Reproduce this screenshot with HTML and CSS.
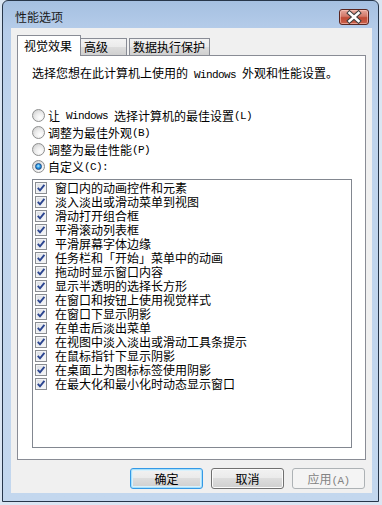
FILE: index.html
```html
<!DOCTYPE html>
<html lang="zh-CN">
<head>
<meta charset="utf-8">
<title>性能选项</title>
<link rel="stylesheet" href="styles.css">
</head>
<body>
<div class="window">
  <div class="titlebar">
    <span class="title">性能选项</span>
    <button class="close" aria-label="关闭">
      <svg width="28" height="14" viewBox="0 0 28 14">
        <path d="M9.5 3 L18.5 11 M18.5 3 L9.5 11" stroke="#3d3d3d" stroke-width="4.6" stroke-linecap="square" fill="none"/>
        <path d="M9.5 3 L18.5 11 M18.5 3 L9.5 11" stroke="#ffffff" stroke-width="2.6" stroke-linecap="square" fill="none"/>
      </svg>
    </button>
  </div>
  <div class="client">
    <div class="tabs">
      <div class="tab active">视觉效果</div>
      <div class="tab t2">高级</div>
      <div class="tab t3">数据执行保护</div>
    </div>
    <div class="panel">
      <p class="intro">选择您想在此计算机上使用的<span class="en"> Windows </span>外观和性能设置。</p>
      <div class="radios">
        <div class="radio"><span class="rb"></span>让<span class="en"> Windows </span>选择计算机的最佳设置<span class="en">(L)</span></div>
        <div class="radio"><span class="rb"></span>调整为最佳外观<span class="en">(B)</span></div>
        <div class="radio"><span class="rb"></span>调整为最佳性能<span class="en">(P)</span></div>
        <div class="radio"><span class="rb on"></span>自定义<span class="en">(C):</span></div>
      </div>
      <div class="listbox">
        <div class="item"><span class="cb"><svg width="10" height="10" viewBox="0 0 10 10"><path d="M1.8 4.8 L4 7.3 L8.4 1.8" stroke="#2b4590" stroke-width="1.9" fill="none"/></svg></span>窗口内的动画控件和元素</div>
        <div class="item"><span class="cb"><svg width="10" height="10" viewBox="0 0 10 10"><path d="M1.8 4.8 L4 7.3 L8.4 1.8" stroke="#2b4590" stroke-width="1.9" fill="none"/></svg></span>淡入淡出或滑动菜单到视图</div>
        <div class="item"><span class="cb"><svg width="10" height="10" viewBox="0 0 10 10"><path d="M1.8 4.8 L4 7.3 L8.4 1.8" stroke="#2b4590" stroke-width="1.9" fill="none"/></svg></span>滑动打开组合框</div>
        <div class="item"><span class="cb"><svg width="10" height="10" viewBox="0 0 10 10"><path d="M1.8 4.8 L4 7.3 L8.4 1.8" stroke="#2b4590" stroke-width="1.9" fill="none"/></svg></span>平滑滚动列表框</div>
        <div class="item"><span class="cb"><svg width="10" height="10" viewBox="0 0 10 10"><path d="M1.8 4.8 L4 7.3 L8.4 1.8" stroke="#2b4590" stroke-width="1.9" fill="none"/></svg></span>平滑屏幕字体边缘</div>
        <div class="item"><span class="cb"><svg width="10" height="10" viewBox="0 0 10 10"><path d="M1.8 4.8 L4 7.3 L8.4 1.8" stroke="#2b4590" stroke-width="1.9" fill="none"/></svg></span>任务栏和「开始」菜单中的动画</div>
        <div class="item"><span class="cb"><svg width="10" height="10" viewBox="0 0 10 10"><path d="M1.8 4.8 L4 7.3 L8.4 1.8" stroke="#2b4590" stroke-width="1.9" fill="none"/></svg></span>拖动时显示窗口内容</div>
        <div class="item"><span class="cb"><svg width="10" height="10" viewBox="0 0 10 10"><path d="M1.8 4.8 L4 7.3 L8.4 1.8" stroke="#2b4590" stroke-width="1.9" fill="none"/></svg></span>显示半透明的选择长方形</div>
        <div class="item"><span class="cb"><svg width="10" height="10" viewBox="0 0 10 10"><path d="M1.8 4.8 L4 7.3 L8.4 1.8" stroke="#2b4590" stroke-width="1.9" fill="none"/></svg></span>在窗口和按钮上使用视觉样式</div>
        <div class="item"><span class="cb"><svg width="10" height="10" viewBox="0 0 10 10"><path d="M1.8 4.8 L4 7.3 L8.4 1.8" stroke="#2b4590" stroke-width="1.9" fill="none"/></svg></span>在窗口下显示阴影</div>
        <div class="item"><span class="cb"><svg width="10" height="10" viewBox="0 0 10 10"><path d="M1.8 4.8 L4 7.3 L8.4 1.8" stroke="#2b4590" stroke-width="1.9" fill="none"/></svg></span>在单击后淡出菜单</div>
        <div class="item"><span class="cb"><svg width="10" height="10" viewBox="0 0 10 10"><path d="M1.8 4.8 L4 7.3 L8.4 1.8" stroke="#2b4590" stroke-width="1.9" fill="none"/></svg></span>在视图中淡入淡出或滑动工具条提示</div>
        <div class="item"><span class="cb"><svg width="10" height="10" viewBox="0 0 10 10"><path d="M1.8 4.8 L4 7.3 L8.4 1.8" stroke="#2b4590" stroke-width="1.9" fill="none"/></svg></span>在鼠标指针下显示阴影</div>
        <div class="item"><span class="cb"><svg width="10" height="10" viewBox="0 0 10 10"><path d="M1.8 4.8 L4 7.3 L8.4 1.8" stroke="#2b4590" stroke-width="1.9" fill="none"/></svg></span>在桌面上为图标标签使用阴影</div>
        <div class="item"><span class="cb"><svg width="10" height="10" viewBox="0 0 10 10"><path d="M1.8 4.8 L4 7.3 L8.4 1.8" stroke="#2b4590" stroke-width="1.9" fill="none"/></svg></span>在最大化和最小化时动态显示窗口</div>
      </div>
    </div>
    <div class="buttons">
      <button class="btn default">确定</button>
      <button class="btn">取消</button>
      <button class="btn disabled">应用<span class="en">(A)</span></button>
    </div>
  </div>
</div>
</body>
</html>
```
FILE: styles.css
```css
html, body {
  margin: 0;
  padding: 0;
}
body {
  width: 382px;
  height: 505px;
  overflow: hidden;
  background: #dbe6f3;
  font-family: "Noto Sans CJK SC", "Noto Sans", sans-serif;
  font-size: 12px;
  color: #000;
}
.en {
  font-family: "Liberation Mono", "DejaVu Sans Mono", monospace;
  font-size: 11px;
  letter-spacing: -0.6px;
  white-space: pre;
}
.window {
  margin-left: 2px;
  width: 377px;
  height: 502px;
  box-sizing: border-box;
  border: 1px solid #27364a;
  border-radius: 6px 6px 0 0;
  background: linear-gradient(#a5c0e1, #b6cdea 30px, #bfd4ed 120px, #c3d7ee);
  padding: 0 6px 8px 8px;
  display: flex;
  flex-direction: column;
}
.titlebar {
  height: 27px;
  box-sizing: border-box;
  padding: 8px 3px 0 4px;
  display: flex;
  justify-content: space-between;
  align-items: flex-start;
}
.title {
  line-height: 16px;
  color: #1a1a1a;
}
.close {
  width: 30px;
  height: 16px;
  box-sizing: border-box;
  padding: 0;
  border: 1px solid #5b2620;
  border-radius: 3px;
  background: linear-gradient(#e7a89c, #d27868 45%, #c04a35 55%, #c9614b);
  box-shadow: inset 0 0 0 1px rgba(255, 210, 200, 0.55);
  display: flex;
  align-items: center;
  justify-content: center;
}
.close svg {
  display: block;
}
.client {
  height: 465px;
  box-sizing: border-box;
  background: #f0f0f0;
  padding: 7px 6px 0 6px;
}
.tabs {
  display: flex;
  align-items: flex-end;
  height: 20px;
}
.tab {
  height: 17px;
  box-sizing: border-box;
  border: 1px solid #898c95;
  border-bottom: none;
  background: linear-gradient(#f3f3f3, #ebebeb 48%, #dcdcdc 52%, #d0d0d0);
  padding: 0 0 0 3px;
  line-height: 16px;
  white-space: nowrap;
}
.tab.active {
  width: 64px;
  height: 21px;
  padding: 0 0 0 6px;
  line-height: 20px;
  background: #fff;
  margin-bottom: -1px;
  position: relative;
  z-index: 1;
}
.tab.t2 {
  width: 47px;
  margin-left: -1px;
}
.tab.t3 {
  width: 81px;
  margin-left: 2px;
}
.panel {
  height: 405px;
  box-sizing: border-box;
  border: 1px solid #898c95;
  background: #fff;
  padding: 0 13px 0 14px;
}
.intro {
  margin: 9px 0 0 0;
  line-height: 16px;
  white-space: nowrap;
}
.radios {
  margin-top: 24px;
}
.radio {
  height: 17px;
  display: flex;
  align-items: center;
  white-space: nowrap;
}
.rb {
  width: 13px;
  height: 13px;
  box-sizing: border-box;
  border-radius: 50%;
  border: 1px solid #8e8f8f;
  background: radial-gradient(circle at 65% 70%, #ffffff, #ececec 45%, #cdcdcd 90%);
  margin-right: 3px;
  flex: none;
}
.rb.on::after {
  content: "";
  display: block;
  width: 7px;
  height: 7px;
  margin: 2px;
  box-sizing: border-box;
  border-radius: 50%;
  border: 1px solid #1b4b86;
  background: radial-gradient(circle at 45% 40%, #b8ecff, #2c9ae6 45%, #0c5aa8);
}
.listbox {
  margin-top: 4px;
  height: 269px;
  box-sizing: border-box;
  border: 1px solid #828790;
  padding: 1px 0 0 2px;
}
.item {
  height: 14px;
  line-height: 14px;
  display: flex;
  align-items: center;
  white-space: nowrap;
}
.cb {
  width: 12px;
  height: 12px;
  box-sizing: border-box;
  border: 1px solid #8a8d92;
  background: linear-gradient(135deg, #dadde2, #f8f9fa);
  box-shadow: inset 0 0 0 1px #f2f3f5;
  margin-right: 8px;
  flex: none;
  display: flex;
  align-items: center;
  justify-content: center;
}
.cb svg {
  display: block;
}
.buttons {
  display: flex;
  justify-content: flex-end;
  gap: 8px;
  margin-top: 8px;
  padding-right: 1px;
}
.btn {
  width: 73px;
  height: 21px;
  box-sizing: border-box;
  border: 1px solid #707070;
  border-radius: 3px;
  background: linear-gradient(#f2f2f2, #ebebeb 45%, #dddddd 50%, #cfcfcf);
  box-shadow: inset 0 0 0 1px #fbfbfb;
  font-family: "Noto Sans CJK SC", sans-serif;
  font-size: 12px;
  color: #000;
  padding: 0;
  line-height: 19px;
}
.btn.default {
  border-color: #3399e6;
  box-shadow: inset 0 0 0 1px #a9e0fa, inset 0 0 0 2px #d9f1fc;
}
.btn.disabled {
  border-color: #adb2b5;
  background: #f4f4f4;
  box-shadow: none;
  color: #838383;
}
```
